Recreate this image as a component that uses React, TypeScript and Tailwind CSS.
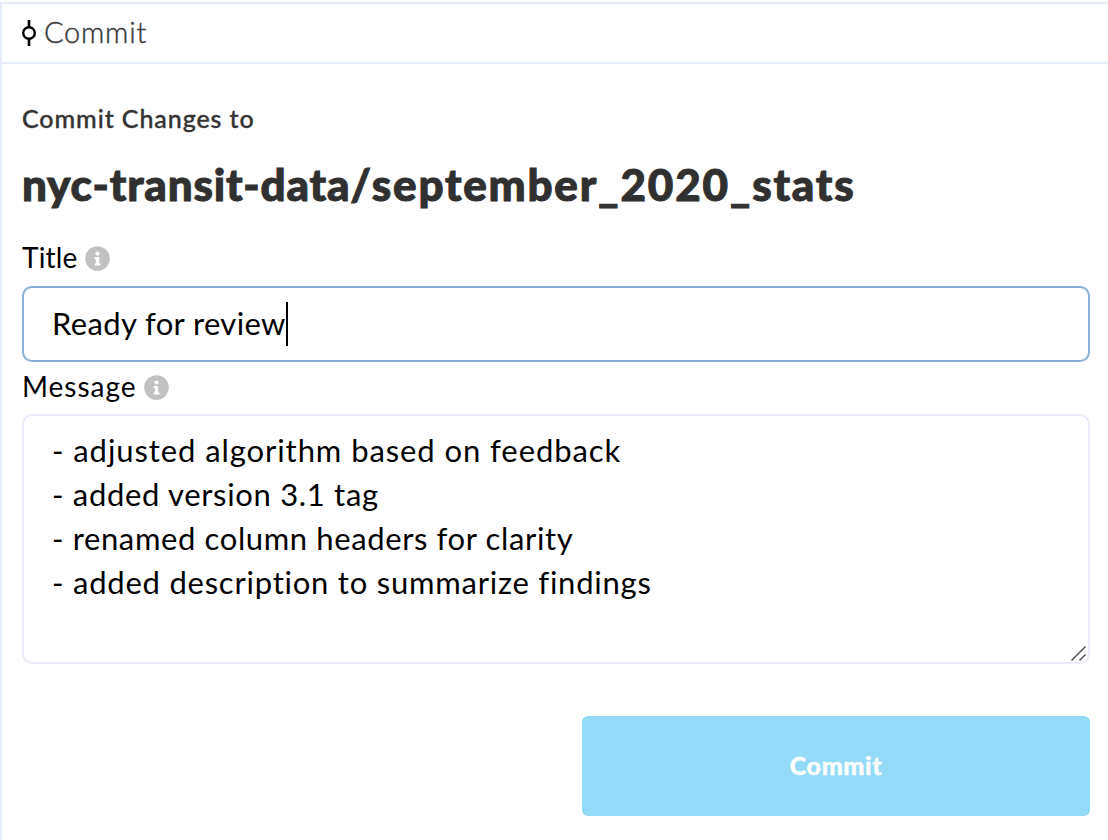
import React from "react";

function CommitIcon() {
  return (
    <svg className="block h-[26px] w-[14px]" viewBox="0 0 14 26" fill="none" stroke="#000" aria-hidden="true">
      <circle cx="7" cy="13" r="5.8" strokeWidth="2.4" />
      <path d="M7 0V7.2M7 18.8V26" strokeWidth="2.6" />
    </svg>
  );
}

function InfoIcon() {
  return (
    <svg className="block size-[25px]" viewBox="0 0 25 25" aria-hidden="true">
      <circle cx="12.5" cy="12.5" r="12.3" fill="#c1c1c1" />
      <circle cx="12.5" cy="7.5" r="2.1" fill="#fff" />
      <path d="M9.6 11h4.6v6.4h1.3v2.2H9.6v-2.2h1.3v-4.2H9.6z" fill="#fff" />
    </svg>
  );
}

const lines = [
  { text: "- adjusted algorithm based on feedback", spacing: "tracking-[0.92px]" },
  { text: "- added version 3.1 tag", spacing: "tracking-[0.68px]" },
  { text: "- renamed column headers for clarity", spacing: "tracking-[0.62px]" },
  { text: "- added description to summarize findings", spacing: "tracking-[0.77px]" },
];

export default function App() {
  return (
    <div className="flex h-[840px] w-[1108px] flex-col overflow-hidden bg-white pt-[2px] font-['Lato',sans-serif] text-black">
      <div className="flex flex-1 flex-col border-l-2 border-t-2 border-[#e6edf8]">
        <header className="flex h-[60px] items-center border-b-2 border-[#e6edf8] pl-5 text-[#3a3a3a]">
          <CommitIcon />
          <span className="ml-2 pb-[3px] text-[29px] leading-[40px] font-light tracking-[0.75px] [-webkit-text-stroke:0.4px_#3a3a3a]">Commit</span>
        </header>
        <main className="flex flex-col pl-5 pr-[18px]">
          <p className="mt-[34px] h-[41px] text-[25px] leading-[40px] font-medium tracking-[0.92px] text-[#333] [-webkit-text-stroke:0.35px_#333]">
            Commit Changes to
          </p>
          <h1 className="mt-[15px] h-[62px] text-[44px] leading-[60px] font-black whitespace-nowrap text-[#303030] [-webkit-text-stroke:1px_#303030]">
            <span className="tracking-[0.8px]">nyc-transit-data/</span>
            <span className="tracking-[1.78px]">september_2020_stats</span>
          </h1>
          <div className="mt-[22px] flex h-[40px] items-center">
            <span className="pb-[2px] text-[28px] leading-[40px] tracking-[0.2px]">Title</span>
            <span className="ml-[7.5px]"><InfoIcon /></span>
          </div>
          <div className="mt-[8px] flex h-[76px] items-center rounded-[10px] border-2 border-[#88add6] pl-7">
            <span className="pb-[3px] text-[31px] leading-[44px] tracking-[0.37px]">Ready for review</span>
            <span className="h-[44px] w-[2px] bg-black" />
          </div>
          <div className="mt-[5px] flex h-[40px] items-center">
            <span className="pb-[2px] text-[28px] leading-[40px] tracking-[1px]">Message</span>
            <span className="ml-[7.5px]"><InfoIcon /></span>
          </div>
          <div className="relative mt-[7px] h-[250px] rounded-[10px] border-2 border-[#e8edf9] pt-[12px] pl-7">
            {lines.map((line) => (
              <div key={line.text} className={"h-[44px] text-[31px] leading-[44px] whitespace-nowrap " + line.spacing}>
                {line.text}
              </div>
            ))}
            <svg className="absolute right-0 bottom-0 h-[18px] w-[18px]" viewBox="0 0 18 18" stroke="#555" strokeWidth="1.5" aria-hidden="true">
              <path d="M1.5 16.5L15.5 2.5M9.5 16.5L15.5 10.5" />
            </svg>
          </div>
          <button className="mt-[52px] h-[100px] w-[508px] self-end rounded-[6px] bg-[#94dbf9] pb-[1px] text-[25px] font-black tracking-[0.6px] text-white [-webkit-text-stroke:0.4px_#fff]">
            Commit
          </button>
        </main>
      </div>
    </div>
  );
}
